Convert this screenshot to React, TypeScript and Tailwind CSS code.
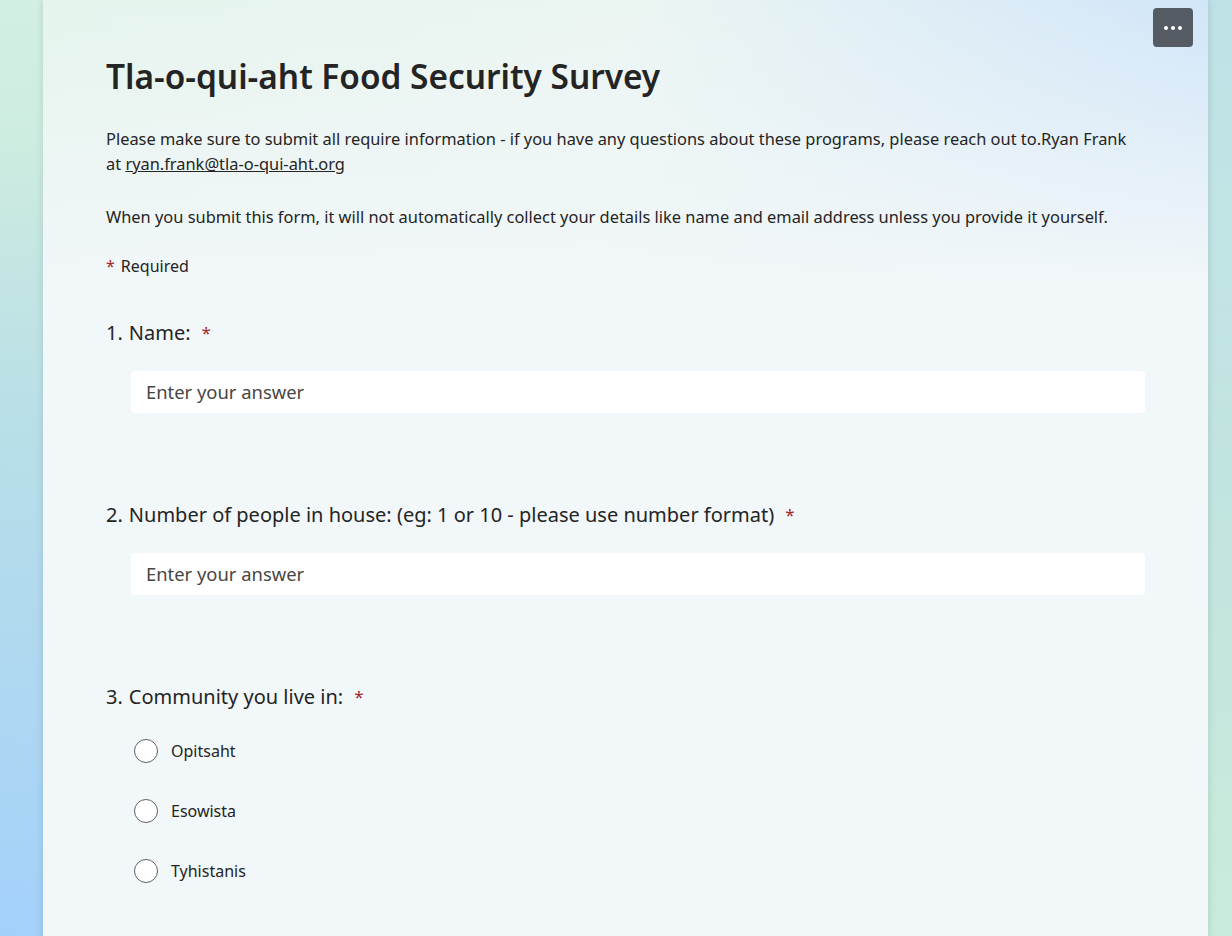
import React from 'react';

const font = { fontFamily: '"Noto Sans", "Open Sans", sans-serif' };

const Question: React.FC<{ n: number; label: string; children: React.ReactNode }> = ({ n, label, children }) => (
  <div className="flex flex-col">
    <div className="flex items-start text-[20px] leading-[24px] text-[#242424]">
      <span className="mr-[6px]">{n}.</span>
      <span>{label}</span>
      <span className="ml-[11px] text-[#a4262c] text-[17px]">*</span>
    </div>
    {children}
  </div>
);

const TextAnswer = () => (
  <div className="ml-[25px] mt-[26px] h-[42px] bg-white rounded-[4px] flex items-center px-[15px] text-[18.4px] text-[#484644]">
    Enter your answer
  </div>
);

const Radio: React.FC<{ label: string }> = ({ label }) => (
  <div className="flex items-center h-[60px] ml-[28px]">
    <span className="w-[24px] h-[24px] rounded-full border-[1.5px] border-[#616161] bg-white" />
    <span className="ml-[13px] text-[16px] text-[#242424]">{label}</span>
  </div>
);

const App: React.FC = () => {
  return (
    <div
      style={font}
      className="min-h-screen w-full overflow-hidden bg-[radial-gradient(ellipse_at_0%_100%,#a3d0fb_0%,transparent_60%),radial-gradient(ellipse_at_100%_0%,#bde1e6_0%,transparent_60%),linear-gradient(180deg,#d2efe2_0%,#c3e6dc_50%,#c8ebdd_100%)]"
    >
      <div className="relative mx-[43px] w-[1165px] min-h-screen shadow-[0_0_8px_rgba(0,0,0,0.12)] bg-[linear-gradient(180deg,rgba(242,247,249,0)_0px,#f2f7f9_290px),linear-gradient(100deg,#e5f4ed_0%,#ebf5f2_45%,#d9eaf7_75%,#cde3f9_95%)] px-[63px] pt-[52px] pb-[40px]">
        <button className="absolute top-[8px] right-[15px] w-[40px] h-[39px] rounded-[4px] bg-[#545b62] flex items-center justify-center gap-[3px]">
          <span className="w-[4px] h-[4px] rounded-full bg-white" />
          <span className="w-[4px] h-[4px] rounded-full bg-white" />
          <span className="w-[4px] h-[4px] rounded-full bg-white" />
        </button>
        <h1 className="text-[33.4px] leading-[48px] font-semibold text-[#242424]">Tla-o-qui-aht Food Security Survey</h1>
        <div className="mt-[26px] text-[16.4px] leading-[25px] text-[#242424]">
          <p>
            Please make sure to submit all require information - if you have any questions about these programs, please reach out to.Ryan Frank
            <br />
            at <span className="underline">ryan.frank@tla-o-qui-aht.org</span>
          </p>
          <p className="mt-[28px]">
            When you submit this form, it will not automatically collect your details like name and email address unless you provide it yourself.
          </p>
          <p className="mt-[25px] text-[16px]">
            <span className="text-[#a4262c] mr-[6px]">*</span>Required
          </p>
        </div>
        <div className="mt-[42px] flex flex-col gap-[90px]">
          <Question n={1} label="Name:">
            <TextAnswer />
          </Question>
          <Question n={2} label="Number of people in house: (eg: 1 or 10 - please use number format)">
            <TextAnswer />
          </Question>
          <Question n={3} label="Community you live in:">
            <div className="mt-[12px] flex flex-col">
              <Radio label="Opitsaht" />
              <Radio label="Esowista" />
              <Radio label="Tyhistanis" />
            </div>
          </Question>
        </div>
      </div>
    </div>
  );
};

export default App;
